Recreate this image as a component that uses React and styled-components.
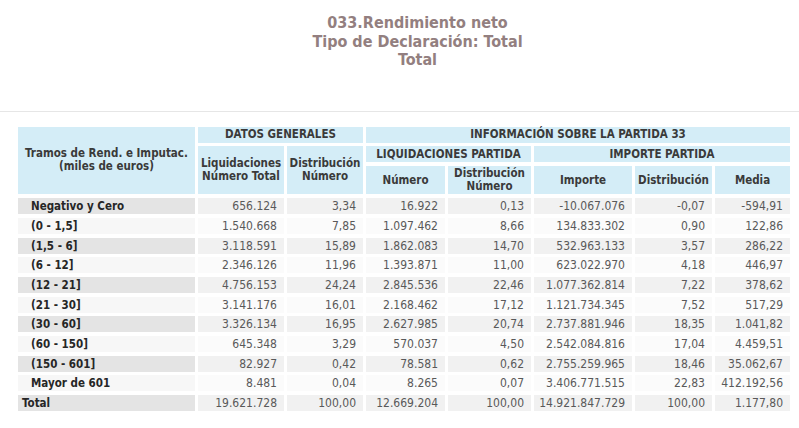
import React from 'react'
import styled, { createGlobalStyle } from 'styled-components'

const GlobalStyle = createGlobalStyle`
  body {
    margin: 0;
    background: #ffffff;
    font-family: "DejaVu Sans Condensed", "DejaVu Sans", Verdana, sans-serif;
  }
`

const Page = styled.div`
  width: 799px;
  height: 428px;
  overflow: hidden;
`

const TitleBlock = styled.div`
  padding: 14px 0 0 36px;
  text-align: center;
  color: #937f80;
  font-weight: bold;
  font-size: 16px;
  line-height: 18.5px;
`

const Rule = styled.div`
  margin-top: 41px;
  height: 1px;
  background: #e6e6e6;
`

const Grid = styled.div`
  margin: 15px 0 0 18px;
  display: grid;
  grid-template-columns: 177px 86px 76px 79px 83px 98px 77px 75px;
  grid-template-rows: 16px 16px 28.6px repeat(11, 16px);
  column-gap: 3px;
  row-gap: 3.7px;
`

const Head = styled.div`
  grid-column: span ${p => p.$cols || 1};
  grid-row: span ${p => p.$rows || 1};
  background: #d4edf7;
  color: #3a3a3a;
  font-weight: bold;
  font-size: 11.5px;
  line-height: 13px;
  display: flex;
  align-items: center;
  justify-content: center;
  text-align: center;
`

const Label = styled.div`
  background: ${p => (p.$odd ? '#e4e4e4' : '#f7f7f7')};
  color: #262626;
  font-weight: bold;
  font-size: 11.5px;
  line-height: 16px;
  padding-left: ${p => (p.$total ? '4px' : '13px')};
  white-space: nowrap;
`

const Num = styled.div`
  background: ${p => (p.$odd ? '#f1f1f1' : '#fbfbfb')};
  color: #595959;
  font-size: 12px;
  line-height: 16px;
  text-align: right;
  padding-right: 7px;
  white-space: nowrap;
`

const rows = [
  ['Negativo y Cero', '656.124', '3,34', '16.922', '0,13', '-10.067.076', '-0,07', '-594,91'],
  ['(0 - 1,5]', '1.540.668', '7,85', '1.097.462', '8,66', '134.833.302', '0,90', '122,86'],
  ['(1,5 - 6]', '3.118.591', '15,89', '1.862.083', '14,70', '532.963.133', '3,57', '286,22'],
  ['(6 - 12]', '2.346.126', '11,96', '1.393.871', '11,00', '623.022.970', '4,18', '446,97'],
  ['(12 - 21]', '4.756.153', '24,24', '2.845.536', '22,46', '1.077.362.814', '7,22', '378,62'],
  ['(21 - 30]', '3.141.176', '16,01', '2.168.462', '17,12', '1.121.734.345', '7,52', '517,29'],
  ['(30 - 60]', '3.326.134', '16,95', '2.627.985', '20,74', '2.737.881.946', '18,35', '1.041,82'],
  ['(60 - 150]', '645.348', '3,29', '570.037', '4,50', '2.542.084.816', '17,04', '4.459,51'],
  ['(150 - 601]', '82.927', '0,42', '78.581', '0,62', '2.755.259.965', '18,46', '35.062,67'],
  ['Mayor de 601', '8.481', '0,04', '8.265', '0,07', '3.406.771.515', '22,83', '412.192,56'],
  ['Total', '19.621.728', '100,00', '12.669.204', '100,00', '14.921.847.729', '100,00', '1.177,80'],
]

const App = () => {
  return (
    <Page>
      <GlobalStyle />
      <TitleBlock>
        <div>033.Rendimiento neto</div>
        <div>Tipo de Declaración: Total</div>
        <div>Total</div>
      </TitleBlock>
      <Rule />
      <Grid>
        {/* cabecera */}
        <Head $rows={3}>Tramos de Rend. e Imputac.<br />(miles de euros)</Head>
        <Head $cols={2}>DATOS GENERALES</Head>
        <Head $cols={5}>INFORMACIÓN SOBRE LA PARTIDA 33</Head>
        <Head $rows={2}>Liquidaciones<br />Número Total</Head>
        <Head $rows={2}>Distribución<br />Número</Head>
        <Head $cols={2}>LIQUIDACIONES PARTIDA</Head>
        <Head $cols={3}>IMPORTE PARTIDA</Head>
        <Head>Número</Head>
        <Head>Distribución<br />Número</Head>
        <Head>Importe</Head>
        <Head>Distribución</Head>
        <Head>Media</Head>

        {/* datos */}
        {rows.map((r, i) => (
          <React.Fragment key={'r' + i}>
            <Label $odd={i % 2 === 0} $total={r[0] === 'Total'}>{r[0]}</Label>
            {r.slice(1).map((v, j) => (
              <Num key={'c' + j} $odd={i % 2 === 0}>{v}</Num>
            ))}
          </React.Fragment>
        ))}
      </Grid>
    </Page>
  )
}

export default App
